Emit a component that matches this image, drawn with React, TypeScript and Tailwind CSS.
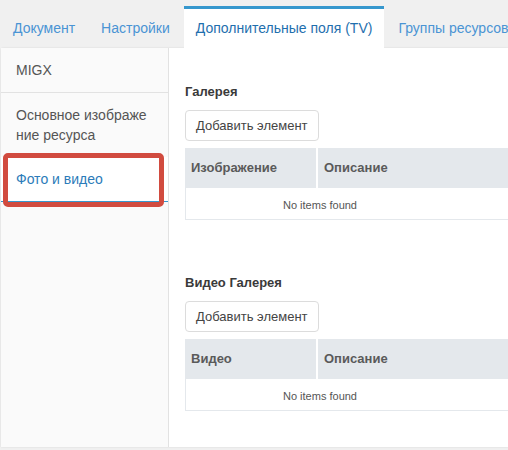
const tabs = [
  { label: 'Документ', active: false },
  { label: 'Настройки', active: false },
  { label: 'Дополнительные поля (TV)', active: true },
  { label: 'Группы ресурсов', active: false },
];

const sections = [
  { title: 'Галерея', first: 'Изображение' },
  { title: 'Видео Галерея', first: 'Видео' },
];

function Gallery({ title, first }: { title: string; first: string }) {
  return (
    <div className="w-[500px]">
      <h3 className="text-[13px] leading-4 font-bold text-[#3a3a3a]">{title}</h3>
      <button className="mt-[10px] h-[31px] px-[10px] border border-[#dcdcdc] rounded-[4px] bg-white text-[13px] text-[#444]">
        Добавить элемент
      </button>
      <div className="mt-[7px]">
        <div className="flex h-10 bg-[#e4e8ec] text-[13px] font-bold text-[#5a5a5a]">
          <div className="w-[133px] flex items-center pl-[6px] border-r-2 border-white">{first}</div>
          <div className="flex items-center pl-[6px]">Описание</div>
        </div>
        <div className="h-8 pt-[3px] border-l border-b border-[#e4e8ec] flex items-center">
          <div className="w-[268px] text-center text-[11px] text-[#555]">No items found</div>
        </div>
      </div>
    </div>
  );
}

export default function App() {
  return (
    <div className="w-[508px] h-[450px] bg-[#f0f0f0] overflow-hidden font-['Liberation_Sans',Arial,sans-serif]">
      <div className="flex gap-[2px] pl-px pt-[6px] h-12 text-[14px]">
        {tabs.map((t) => (
          <div
            key={t.label}
            className={
              t.active
                ? 'px-3 bg-white border-t-[3px] border-[#3697cd] text-[#1f6fae] flex items-center whitespace-nowrap'
                : 'px-3 pt-[3px] text-[#4a94d4] flex items-center whitespace-nowrap'
            }
          >
            {t.label}
          </div>
        ))}
      </div>

      <div className="ml-px flex h-[399px] bg-white rounded-tl-[2px] shadow-[0_0_2px_rgba(0,0,0,0.12)]">
        <aside className="w-[168px] shrink-0 bg-[#fafafa] border-r border-[#e2e2e2] text-[14px] text-[#555] leading-5">
          <div className="px-[15px] py-3 border-b border-[#e2e2e2]">MIGX</div>
          <div className="px-[15px] py-3 break-all">Основное изображение ресурса</div>
          <div className="relative px-[15px] py-3 bg-white text-[#2b7bb9] border-b border-[#3697cd]">
            Фото и видео
            <div className="absolute left-[2px] top-[-4px] w-[161px] h-[54px] border-[5px] border-[#d14b3f] rounded-[5px]" />
          </div>
        </aside>

        <main className="flex-1 overflow-hidden pl-4 pt-9">
          <div className="flex flex-col gap-[55px]">
            {sections.map((s) => (
              <Gallery key={s.title} title={s.title} first={s.first} />
            ))}
          </div>
        </main>
      </div>
    </div>
  );
}
